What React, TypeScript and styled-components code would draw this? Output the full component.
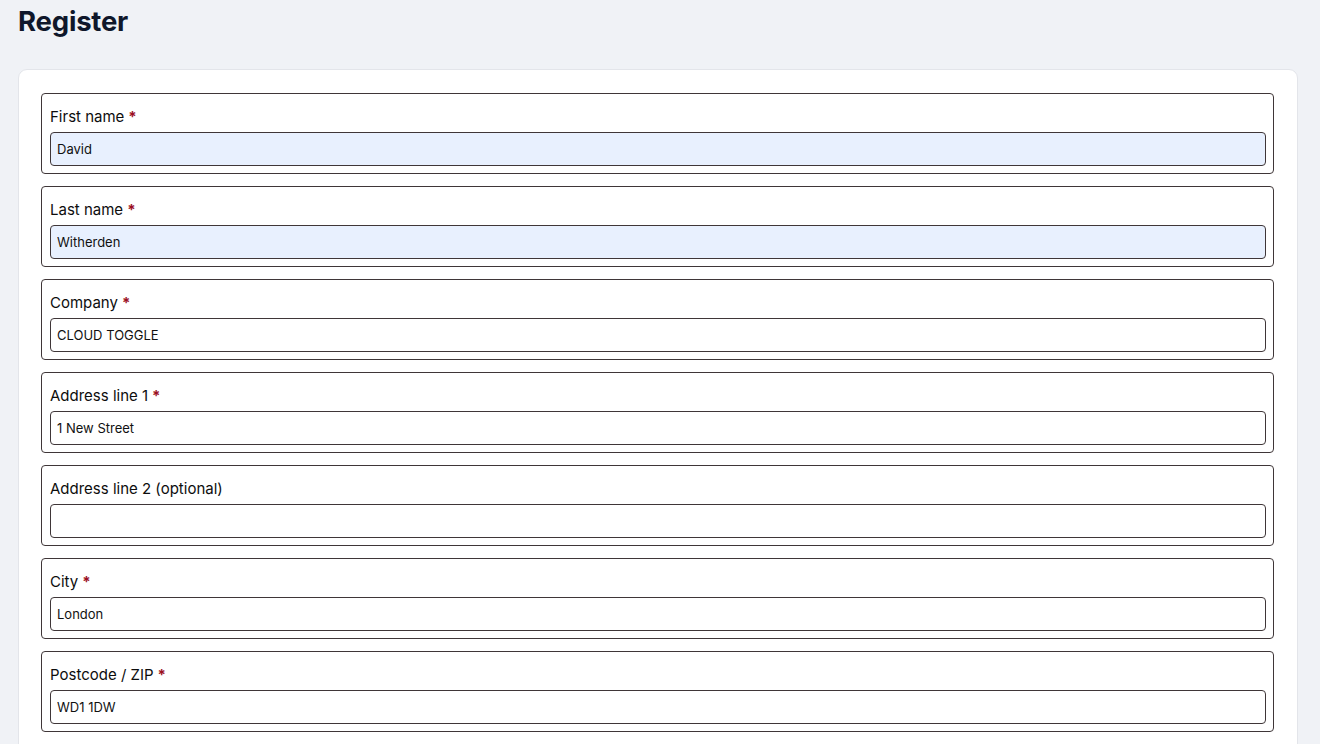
import React from "react";
import styled, { createGlobalStyle } from "styled-components";

const GlobalStyle = createGlobalStyle`
  html, body {
    margin: 0;
    padding: 0;
    background: #f0f2f6;
    font-family: Inter, "Noto Sans", "Liberation Sans", sans-serif;
    color: #111827;
  }
  ::-webkit-scrollbar { width: 0; height: 0; }
`;

const Page = styled.main`
  padding: 0 22px 24px 18px;
`;

const Title = styled.h1`
  margin: 0;
  padding: 3px 0 0 0;
  height: 69px;
  box-sizing: border-box;
  font-size: 27.5px;
  line-height: 36px;
  font-weight: 700;
  color: #0f172a;
  letter-spacing: -0.2px;
`;

const Card = styled.section`
  background: #ffffff;
  border: 1px solid #e3e5ea;
  border-radius: 9px;
  padding: 23px 23px 24px 22px;
  display: flex;
  flex-direction: column;
  gap: 12px;
`;

const Field = styled.div`
  border: 1px solid #3f3638;
  border-radius: 4px;
  padding: 12px 7px 7px 8px;
  display: flex;
  flex-direction: column;
  gap: 4px;
`;

const Label = styled.label`
  font-size: 15px;
  line-height: 22px;
  color: #0d0d0d;
`;

const Required = styled.span`
  color: #9b0f1e;
  font-weight: 700;
  margin-left: 4px;
`;

const Input = styled.input<{ $filled?: boolean }>`
  box-sizing: border-box;
  width: 100%;
  height: 34px;
  border: 1px solid #3f3638;
  border-radius: 4px;
  padding: 0 6px 1px;
  font-family: Inter, "Noto Sans", "Liberation Sans", sans-serif;
  font-size: 13px;
  color: #111111;
  background: ${(p) => (p.$filled ? "#e8f0fe" : "#ffffff")};
  outline: none;
`;

type FieldDef = {
  id: string;
  label: string;
  value: string;
  required: boolean;
  autofilled?: boolean;
};

const fields: FieldDef[] = [
  { id: "first", label: "First name", value: "David", required: true, autofilled: true },
  { id: "last", label: "Last name", value: "Witherden", required: true, autofilled: true },
  { id: "company", label: "Company", value: "CLOUD TOGGLE", required: true },
  { id: "addr1", label: "Address line 1", value: "1 New Street", required: true },
  { id: "addr2", label: "Address line 2 (optional)", value: "", required: false },
  { id: "city", label: "City", value: "London", required: true },
  { id: "zip", label: "Postcode / ZIP", value: "WD1 1DW", required: true },
];

export default function App() {
  return (
    <>
      <GlobalStyle />
      <Page>
        <Title>Register</Title>
        <Card>
          {fields.map((f) => (
            <Field key={f.id}>
              <Label htmlFor={f.id}>
                {f.label}
                {f.required && <Required>*</Required>}
              </Label>
              <Input id={f.id} defaultValue={f.value} $filled={f.autofilled} />
            </Field>
          ))}
        </Card>
      </Page>
    </>
  );
}
